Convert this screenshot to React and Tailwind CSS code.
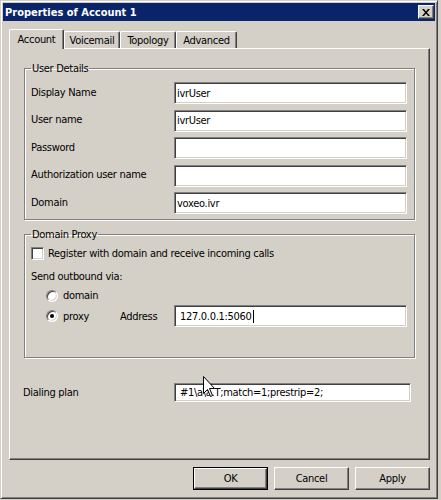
import React from "react";

const sunken =
  "border border-t-[#808080] border-l-[#808080] border-b-white border-r-white shadow-[inset_1px_1px_0_#404040,inset_-1px_-1px_0_#d4d0c8] bg-white";
const raised =
  "border border-t-white border-l-white border-b-[#404040] border-r-[#404040] shadow-[inset_-1px_-1px_0_#808080,inset_1px_1px_0_#d4d0c8] bg-[#d4d0c8]";
const etched = "border border-[#808080] shadow-[1px_1px_0_#fff,inset_1px_1px_0_#fff]";

function Field({ value, width = "w-[233px]", height = "h-[22px]", pad = "pl-[2px]", caret }) {
  return (
    <div className={`${sunken} ${width} ${height} ${pad} flex items-center whitespace-nowrap overflow-hidden`}>
      <span>{value}</span>
      {caret && <span className="inline-block w-[1px] h-[13px] bg-black ml-[1px]" />}
    </div>
  );
}

function Radio({ checked }) {
  return (
    <div className="w-[12px] h-[12px] rounded-full bg-white border border-t-[#808080] border-l-[#808080] border-b-white border-r-white shadow-[inset_1px_1px_0_#404040,inset_-1px_-1px_0_#d4d0c8] flex items-center justify-center">
      {checked && <div className="w-[4px] h-[4px] rounded-full bg-black" />}
    </div>
  );
}

function Row({ label, value }) {
  return (
    <div className="flex items-center h-[22px]">
      <span className="w-[143px] -mt-[2px]">{label}</span>
      <Field value={value} />
    </div>
  );
}

function Tab({ label, active, width }) {
  if (active) {
    return (
      <div
        className={`${width} h-[20px] -mb-[1px] relative z-10 bg-[#d4d0c8] border-l border-t border-r border-l-white border-t-white border-r-[#404040] rounded-t-[2px] shadow-[inset_-1px_0_0_#808080] text-center pt-[3px]`}
      >
        {label}
      </div>
    );
  }
  return (
    <div
      className={`${width} h-[17px] bg-[#d4d0c8] border-l border-t border-r border-l-white border-t-white border-r-[#404040] rounded-t-[2px] shadow-[inset_-1px_0_0_#808080] text-center pt-[2px]`}
    >
      {label}
    </div>
  );
}

function Button({ label, isDefault }) {
  if (isDefault) {
    return (
      <div className="w-[75px] h-[23px] border border-black">
        <div className={`${raised} w-full h-full flex items-center justify-center`}>{label}</div>
      </div>
    );
  }
  return <div className={`${raised} w-[75px] h-[23px] flex items-center justify-center`}>{label}</div>;
}

export default function App() {
  return (
    <div className="relative w-[441px] h-[500px] bg-[#d4d0c8] text-black text-[11px] leading-[13px] tracking-[-0.3px] font-['DejaVu_Sans_Condensed','Liberation_Sans',sans-serif]">
      <div className="w-[438px] h-[499px] border border-t-[#d4d0c8] border-l-[#d4d0c8] border-b-[#404040] border-r-[#404040] shadow-[inset_1px_1px_0_#fff,inset_-1px_-1px_0_#808080] p-[2px] flex flex-col">
        {/* title bar */}
        <div className="h-[18px] bg-[#0a246a] flex items-center justify-between pl-[2px] pr-[1px]">
          <span className="text-white font-bold tracking-normal">Properties of Account 1</span>
          <div className={`${raised} w-[16px] h-[14px] flex items-center justify-center`}>
            <svg width="8" height="7" viewBox="0 0 8 7">
              <path d="M0 0h2l2 2.5L6 0h2L5 3.5 8 7H6L4 4.5 2 7H0l3-3.5z" fill="#000" />
            </svg>
          </div>
        </div>

        <div className="pl-[6px] pr-[5px] pt-[8px]">
          {/* tabs */}
          <div className="flex items-end">
            <Tab label="Account" active width="w-[55px]" />
            <Tab label="Voicemail" width="w-[56px]" />
            <Tab label="Topology" width="w-[56px]" />
            <Tab label="Advanced" width="w-[61px]" />
          </div>

          {/* panel */}
          <div className="w-[421px] h-[412px] border border-t-white border-l-white border-b-[#404040] border-r-[#404040] shadow-[inset_-1px_-1px_0_#808080] pt-[13px] px-[14px]">
            <fieldset className={`${etched} pl-[6px] pr-[7px] pt-[7px] pb-[5px]`}>
              <legend className="px-[1px]">User Details</legend>
              <div className="flex flex-col gap-[5.5px]">
                <Row label="Display Name" value="ivrUser" />
                <Row label="User name" value="ivrUser" />
                <Row label="Password" value="" />
                <Row label="Authorization user name" value="" />
                <Row label="Domain" value="voxeo.ivr" />
              </div>
            </fieldset>

            <fieldset className={`${etched} mt-[8px] pl-[6px] pr-[7px] pt-[6px] pb-[30px]`}>
              <legend className="px-[1px]">Domain Proxy</legend>
              <div className="flex items-center h-[13px] gap-[4px]">
                <div className={`${sunken} w-[13px] h-[13px]`} />
                <span>Register with domain and receive incoming calls</span>
              </div>
              <div className="mt-[10px]">Send outbound via:</div>
              <div className="mt-[6px] ml-[15px] flex items-center h-[13px]">
                <Radio />
                <span className="ml-[5px]">domain</span>
              </div>
              <div className="mt-[3px] ml-[15px] flex items-center h-[22px]">
                <div className="w-[74px] flex items-center">
                  <Radio checked />
                  <span className="ml-[5px]">proxy</span>
                </div>
                <span className="w-[54px]">Address</span>
                <Field value="127.0.0.1:5060" pad="pl-[5px]" caret />
              </div>
            </fieldset>

            <div className="mt-[25px] -ml-[1px] flex items-center h-[19px]">
              <span className="w-[151px]">Dialing plan</span>
              <Field value="#1\a\a.T;match=1;prestrip=2;" width="w-[237px]" height="h-[19px]" pad="pl-[5px]" />
            </div>
          </div>

          {/* buttons */}
          <div className="mt-[7px] flex justify-end gap-[6px]">
            <Button label="OK" isDefault />
            <Button label="Cancel" />
            <Button label="Apply" />
          </div>
        </div>
      </div>

      {/* mouse pointer */}
      <svg className="absolute left-[203px] top-[376px]" width="13" height="22" viewBox="0 0 13 22">
        <path
          d="M0.5 0.5V17.5L4.5 13.5L7.5 20.5L9.5 19.5L6.5 12.5H11.5Z"
          fill="#fff"
          stroke="#000"
          strokeWidth="1"
          strokeLinejoin="miter"
        />
      </svg>
    </div>
  );
}
